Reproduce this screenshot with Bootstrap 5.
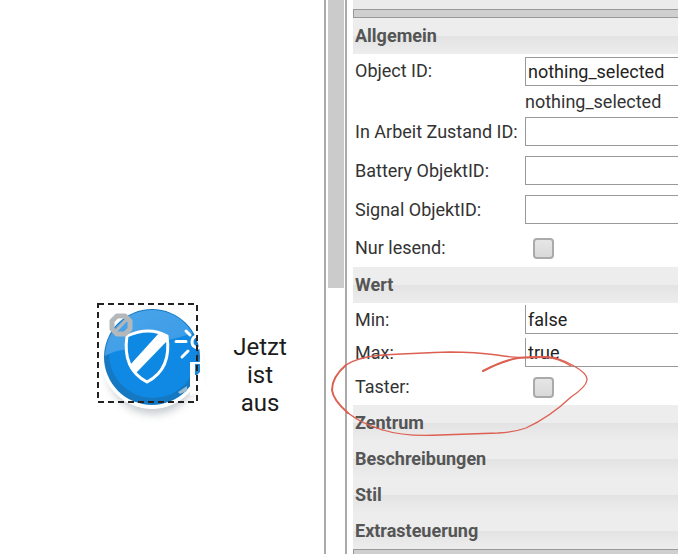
<!DOCTYPE html>
<html lang="de">
<head>
<meta charset="utf-8">
<meta name="viewport" content="width=device-width, initial-scale=1">
<title>Widget-Editor</title>
<link href="https://cdn.jsdelivr.net/npm/bootstrap@5.3.0/dist/css/bootstrap.min.css" rel="stylesheet">
<style>
  body { font-family: Roboto, "Liberation Sans", sans-serif; font-size: 18px; line-height: 28px; color: #222; background: #fff; }
  .canvas { width: 324px; padding: 303px 0 0 97px; }
  .widget { width: 100px; height: 100px; border: 0; }
  .widget svg { position: absolute; left: -7px; top: -5px; pointer-events: none; }
  .caption { width: 80px; margin: 30px 0 0 23px; font-size: 24px; color: #1c1c1c; }
  .track { width: 23px; border-left: 2px solid #aaa; border-right: 2px solid #aaa; padding: 0 1px 0 2px; }
  .thumb { height: 288px; background: #cbcbcb; }
  .props { padding-left: 6px; }
  .strip { height: 9px; background: #ebebeb; }
  .bar { height: 9px; border: 1px solid #999; border-right: 0; background: #cfcfcf; }
  .bar-end { border-bottom: 0; }
  .head { height: 36px; padding-left: 2px; font-size: 18px; font-weight: 700; line-height: 35px; color: #555; background: linear-gradient(#ededed 0 50%, #e3e3e3 50%, #ededed 100%); }
  .prop { height: 39px; padding-left: 2px; color: #333; }
  .prop-tight { height: 33px; }
  .prop-id { height: 34px; }
  .prop-check { height: 38px; }
  .prop-push { height: 36px; }
  .prop-label { width: 170px; }
  .field { height: 29px; min-width: 0; padding: 0 2px; border: 1px solid #999; border-right: 0; border-radius: 0; color: #222; background: #fff; }
  .hint { padding-left: 172px; height: 24px; line-height: 27px; color: #333; }
  .tick { appearance: none; width: 21px; height: 21px; margin-left: 8px; border: 2px solid #aaa; border-radius: 4px; background: linear-gradient(#e6e6e6, #d9d9d9); }
  .mark-up { position: absolute; left: 324px; top: 340px; pointer-events: none; }
</style>
<script src="https://cdn.jsdelivr.net/npm/bootstrap@5.3.0/dist/js/bootstrap.bundle.min.js"></script>
</head>
<body>
<div class="d-flex min-vh-100 position-relative overflow-hidden">
  <main class="canvas d-flex flex-shrink-0 align-items-start">
    <button type="button" class="widget position-relative p-0 bg-transparent flex-shrink-0" aria-label="Alarm umschalten">
      <svg width="124" height="130" viewBox="90 298 124 130" aria-hidden="true">
        <defs>
          <linearGradient id="gloss" x1="0" y1="0" x2="1" y2="1"><stop offset="0" stop-color="#5aaceb"/><stop offset="1" stop-color="#3d9ce6"/></linearGradient>
          <filter id="soft" x="-20%" y="-20%" width="140%" height="140%"><feGaussianBlur stdDeviation="4"/></filter>
          <clipPath id="disc"><circle cx="152" cy="357" r="47"/></clipPath>
        </defs>
        <circle cx="153" cy="368" r="46" fill="#9fa8ad" opacity=".6" filter="url(#soft)"/>
        <circle cx="152" cy="358" r="51" fill="#fff"/>
        <circle cx="152" cy="357" r="48" fill="#1478c2"/>
        <circle cx="153" cy="354" r="44" fill="#1089e4"/>
        <path d="M104 357Q110 352 122 350Q160 344 204 330V300H104z" fill="url(#gloss)" opacity=".85" clip-path="url(#disc)"/>
        <path d="M127 336Q138 331 148 331Q158 331 167 336Q172 369 147 382Q122 369 127 336z" fill="#0d88e3" stroke="#fff" stroke-width="3"/>
        <path d="M159 333L167 337V341L136 373L130 365z" fill="#fff"/>
        <g fill="none" stroke="#fff" stroke-width="3" stroke-linecap="round"><path d="M176 341.500h10M182 357l6-6M186 331l4 4"/><path d="M198 335q-6 2-6 7t6 6"/></g>
        <path d="M190 362h14v26l-14 8z" fill="#fff"/>
        <path d="M195 364h5v8l-3 3h-2z" fill="#1a86d6"/>
        <path d="M178 392l9-6v5l-7 3z" fill="#9dbbd0"/>
        <path d="M114 333l14-15" stroke="#b4b8ba" stroke-width="3"/>
        <path d="M117 316h8l5 5v8l-5 5h-8l-5-5v-8z" fill="none" stroke="#b4b8ba" stroke-width="5" stroke-linejoin="round"/>
        <rect x="98" y="304" width="99" height="98" fill="none" stroke="#222" stroke-width="2" stroke-dasharray="6 4"/>
      </svg>
    </button>
    <div class="caption text-center flex-shrink-0">Jetzt<br>ist<br>aus</div>
  </main>
  <div class="track flex-shrink-0"><div class="thumb"></div></div>
  <form class="props flex-fill">
    <div class="strip"></div>
    <div class="bar"></div>
    <h2 class="head m-0">Allgemein</h2>
    <div class="prop prop-id d-flex align-items-center"><label class="prop-label flex-shrink-0" for="oid">Object ID:</label><input class="field flex-fill" id="oid" value="nothing_selected"></div>
    <div class="hint">nothing_selected</div>
    <div class="prop d-flex align-items-center"><label class="prop-label flex-shrink-0" for="work">In Arbeit Zustand ID:</label><input class="field flex-fill" id="work"></div>
    <div class="prop d-flex align-items-center"><label class="prop-label flex-shrink-0" for="battery">Battery ObjektID:</label><input class="field flex-fill" id="battery"></div>
    <div class="prop d-flex align-items-center"><label class="prop-label flex-shrink-0" for="signal">Signal ObjektID:</label><input class="field flex-fill" id="signal"></div>
    <div class="prop prop-check d-flex align-items-center"><label class="prop-label flex-shrink-0" for="readonly">Nur lesend:</label><input type="checkbox" class="tick" id="readonly"></div>
    <h2 class="head m-0">Wert</h2>
    <div class="prop prop-tight d-flex align-items-center"><label class="prop-label flex-shrink-0" for="min">Min:</label><input class="field border-top-0 flex-fill" id="min" value="false"></div>
    <div class="prop prop-tight d-flex align-items-center"><label class="prop-label flex-shrink-0" for="max">Max:</label><input class="field border-top-0 flex-fill" id="max" value="true"></div>
    <div class="prop prop-push d-flex align-items-center"><label class="prop-label flex-shrink-0" for="push">Taster:</label><input type="checkbox" class="tick" id="push"></div>
    <h2 class="head m-0">Zentrum</h2>
    <h2 class="head m-0">Beschreibungen</h2>
    <h2 class="head m-0">Stil</h2>
    <h2 class="head m-0">Extrasteuerung</h2>
    <div class="bar bar-end"></div>
  </form>
  <svg class="mark-up" width="270" height="104" viewBox="324 340 270 104" fill="none" stroke="#dc5f52" stroke-linecap="round" stroke-linejoin="round" aria-hidden="true">
    <path d="M483 371Q502 361 518 358Q540 356 556 358" stroke-width="2"/>
    <path d="M556 358Q566 361 574 366Q588 374 587 380Q586 387 571 397Q550 417 526 428Q515 432 498 433L440 435Q405 437 383 430Q362 424 348 413" stroke-width="1.300"/>
    <path d="M348 413Q333 400 332 390Q332 377 346 365" stroke-width="2"/>
    <path d="M346 365Q358 357 383 355Q420 353 450 352Q475 352 497 355Q520 359 545 357Q559 358 571 366" stroke-width="1.300"/>
  </svg>
</div>
</body>
</html>
